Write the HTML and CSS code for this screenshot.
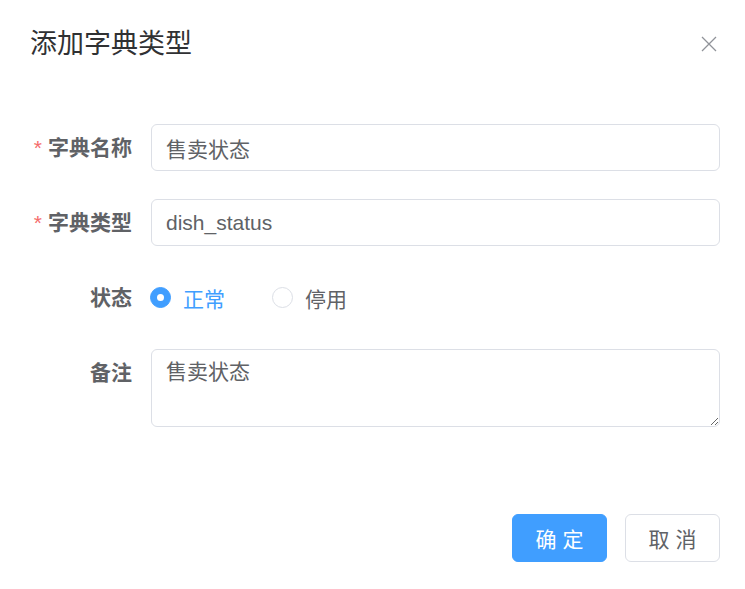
FILE: index.html
```html
<!DOCTYPE html>
<html lang="zh-CN">
<head>
<meta charset="utf-8">
<title>添加字典类型</title>
<link rel="stylesheet" href="styles.css">
</head>
<body>
<div class="dialog">
  <div class="header">
    <span class="title">添加字典类型</span>
    <button class="close" type="button" aria-label="关闭">
      <svg width="16" height="16" viewBox="0 0 16 16"><path d="M1 1 L15 15 M15 1 L1 15" stroke="#909399" stroke-width="1.3" fill="none"/></svg>
    </button>
  </div>
  <form class="form">
    <div class="item">
      <label class="label"><span class="req">*</span>字典名称</label>
      <input class="input" type="text" value="售卖状态">
    </div>
    <div class="item">
      <label class="label"><span class="req">*</span>字典类型</label>
      <input class="input" type="text" value="dish_status">
    </div>
    <div class="item">
      <label class="label">状态</label>
      <div class="radios">
        <span class="radio checked"><span class="dot"></span><span class="rtext">正常</span></span>
        <span class="radio"><span class="dot"></span><span class="rtext">停用</span></span>
      </div>
    </div>
    <div class="item">
      <label class="label">备注</label>
      <textarea class="textarea">售卖状态</textarea>
    </div>
  </form>
  <div class="footer">
    <button class="btn primary" type="button">确 定</button>
    <button class="btn" type="button">取 消</button>
  </div>
</div>
</body>
</html>
```
FILE: styles.css
```css
html, body {
  margin: 0;
  padding: 0;
  background: #fff;
}
body {
  font-family: "Liberation Sans", "Noto Sans CJK SC", sans-serif;
  color: #606266;
}
.dialog {
  width: 745px;
  box-sizing: border-box;
}
.header {
  display: flex;
  justify-content: space-between;
  align-items: center;
  padding: 26px 28px 0 30px;
}
.title {
  font-size: 27px;
  line-height: 36px;
  color: #303133;
}
.close {
  border: 0;
  background: none;
  padding: 0;
  width: 16px;
  height: 16px;
  display: flex;
}
.form {
  padding: 62px 25px 0 30px;
  margin: 0;
}
.item {
  display: flex;
  margin-bottom: 28px;
}
.label {
  width: 121px;
  flex: none;
  box-sizing: border-box;
  padding-right: 19px;
  text-align: right;
  font-size: 21px;
  font-weight: bold;
  line-height: 47px;
  color: #606266;
}
.req {
  color: #F56C6C;
  font-weight: normal;
  margin-right: 6px;
}
.input {
  flex: 1;
  height: 47px;
  box-sizing: border-box;
  border: 1px solid #DCDFE6;
  border-radius: 6px;
  padding: 0 14px;
  font-family: inherit;
  font-size: 21px;
  color: #606266;
  outline: none;
}
.radios {
  display: flex;
  align-items: center;
  height: 47px;
  margin-left: -1px;
  gap: 47px;
}
.radio {
  display: flex;
  align-items: center;
  gap: 12px;
  font-size: 21px;
  color: #606266;
}
.dot {
  width: 21px;
  height: 21px;
  box-sizing: border-box;
  border: 1px solid #DCDFE6;
  border-radius: 50%;
  display: flex;
  align-items: center;
  justify-content: center;
}
.radio.checked .dot {
  background: #409EFF;
  border-color: #409EFF;
}
.radio.checked .dot::after {
  content: "";
  width: 7px;
  height: 7px;
  border-radius: 50%;
  background: #fff;
}
.radio.checked {
  color: #409EFF;
}
.textarea {
  flex: 1;
  height: 78px;
  box-sizing: border-box;
  border: 1px solid #DCDFE6;
  border-radius: 6px;
  padding: 6px 14px;
  font-family: inherit;
  font-size: 21px;
  line-height: 31.5px;
  color: #606266;
  resize: vertical;
  outline: none;
  display: block;
}
.footer {
  display: flex;
  justify-content: flex-end;
  gap: 18px;
  padding: 59px 25px 0 0;
}
.btn {
  width: 95px;
  height: 48px;
  box-sizing: border-box;
  border: 1px solid #DCDFE6;
  border-radius: 6px;
  background: #fff;
  color: #606266;
  font-family: inherit;
  font-size: 21px;
  padding: 0;
}
.btn.primary {
  background: #409EFF;
  border-color: #409EFF;
  color: #fff;
}
```
